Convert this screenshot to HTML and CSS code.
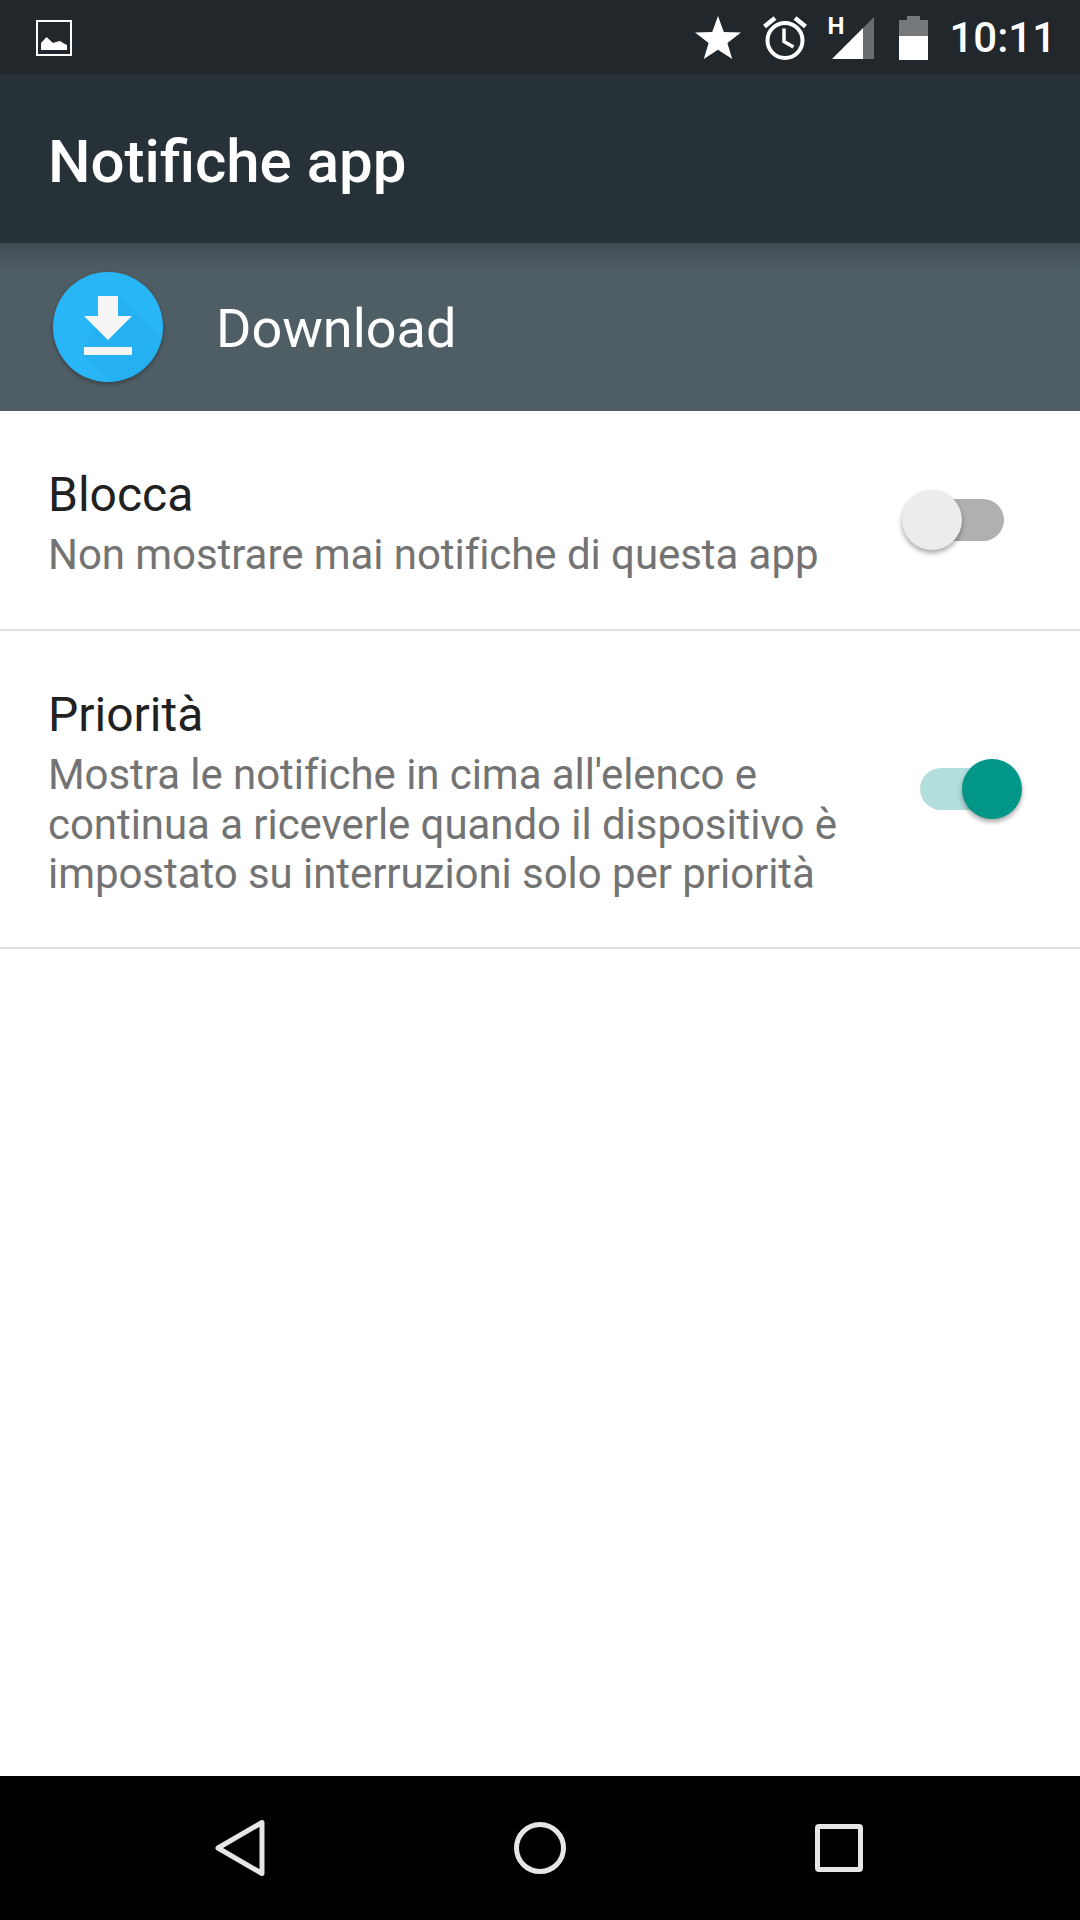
FILE: index.html
```html
<!DOCTYPE html>
<html lang="it">
<head>
  <meta charset="UTF-8">
  <title>Notifiche app</title>
  <link rel="stylesheet" href="styles.css">
</head>
<body>
  <div class="screen">

    <!-- Barra di stato -->
    <div class="status-bar">
      <svg class="ico-picture" width="36" height="36" viewBox="0 0 36 36">
        <path fill="#fff" fill-rule="evenodd" d="M0 0h36v36H0z M2 2v32h32V2z"/>
        <path fill="#fff" d="M5 30v-7l5.500-6 6.500 6 3-1 4-1 3 2 4 2v5z"/>
      </svg>
      <div class="status-right">
        <svg class="ico-star" width="46" height="43" viewBox="0 0 46 43">
          <path fill="#fff" d="M23 0l5.800 15.900 17.200.6-13.600 10.500 4.800 16L23 33.700 8.800 43l4.800-16L0 16.500l17.200-.6z"/>
        </svg>
        <svg class="ico-alarm" width="44" height="44" viewBox="0 0 44 44">
          <circle cx="22" cy="24.500" r="17.500" fill="none" stroke="#fff" stroke-width="4"/>
          <path fill="none" stroke="#fff" stroke-width="3.500" d="M21 12.500v13l9.500 5.500"/>
          <path fill="none" stroke="#fff" stroke-width="4.500" d="M1.500 10.500L12 2 M42.500 10.500L32 2"/>
        </svg>
        <div class="signal">
          <span class="signal-h">H</span>
          <svg width="42" height="42" viewBox="0 0 42 42">
            <path fill="#fff" fill-opacity=".32" d="M42 0v42H31V11z"/>
            <path fill="#fff" d="M31 11v31H0z"/>
          </svg>
        </div>
        <svg class="ico-battery" width="29" height="44" viewBox="0 0 29 44">
          <path fill="#fff" fill-opacity=".38" d="M8 0h13v4h8v16H0V4h8z"/>
          <path fill="#fff" d="M0 20h29v24H0z"/>
        </svg>
        <span class="clock">10:11</span>
      </div>
    </div>

    <!-- Action bar -->
    <div class="app-bar">Notifiche app</div>

    <!-- App selezionata -->
    <div class="app-header">
      <svg class="app-icon" width="112" height="112" viewBox="0 0 112 112">
        <defs>
          <clipPath id="disc"><circle cx="56" cy="55" r="55"/></clipPath>
        </defs>
        <circle cx="56" cy="55" r="55" fill="#29b6f6"/>
        <path clip-path="url(#disc)" fill="#0288d1" fill-opacity=".12" d="M66 24l46 46v42H60L32 83V75z"/>
        <path fill="#f5f5f5" d="M46 24h20v20h14L56 68 32 44h14z"/>
        <path fill="#f5f5f5" d="M32 75h48v8H32z"/>
      </svg>
      <span class="app-name">Download</span>
    </div>

    <!-- Impostazioni -->
    <div class="settings">
      <div class="row row-block">
        <div class="row-text">
          <div class="row-title">Blocca</div>
          <div class="row-summary">Non mostrare mai notifiche di questa app</div>
        </div>
        <div class="switch">
          <div class="track track-off"></div>
          <div class="thumb thumb-off"></div>
        </div>
      </div>
      <div class="row row-priority">
        <div class="row-text">
          <div class="row-title">Priorità</div>
          <div class="row-summary">Mostra le notifiche in cima all'elenco e<br>continua a riceverle quando il dispositivo è<br>impostato su interruzioni solo per priorità</div>
        </div>
        <div class="switch">
          <div class="track track-on"></div>
          <div class="thumb thumb-on"></div>
        </div>
      </div>
    </div>

    <!-- Barra di navigazione -->
    <div class="nav-bar">
      <svg width="50" height="58" viewBox="0 0 50 58">
        <path fill="none" stroke="#e6e6e6" stroke-width="5" stroke-linejoin="round" d="M47 3.500v51L3 29z"/>
      </svg>
      <svg width="52" height="52" viewBox="0 0 52 52">
        <circle cx="26" cy="26" r="23.500" fill="none" stroke="#e6e6e6" stroke-width="5"/>
      </svg>
      <svg width="48" height="48" viewBox="0 0 48 48">
        <rect x="2.500" y="2.500" width="43" height="43" rx="1.500" fill="none" stroke="#e6e6e6" stroke-width="5"/>
      </svg>
    </div>

  </div>
</body>
</html>
```

FILE: styles.css
```css
* { box-sizing: border-box; margin: 0; padding: 0; }
body { background: #fff; font-family: Roboto, sans-serif; }
svg { display: block; flex: none; }

.screen {
  display: flex;
  flex-direction: column;
  width: 1080px;
  height: 1920px;
  overflow: hidden;
}

.status-bar {
  display: flex;
  align-items: center;
  justify-content: space-between;
  flex: none;
  height: 75px;
  padding: 0 24px 0 36px;
  background: #21272b;
}
.status-right {
  display: flex;
  align-items: center;
}
.ico-star { margin-right: 22px; }
.ico-alarm { margin-right: 25px; }
.signal {
  position: relative;
  margin-right: 25px;
}
.signal-h {
  position: absolute;
  left: -5px;
  top: -2px;
  color: #fff;
  font-family: "Liberation Sans Narrow", Roboto, sans-serif;
  font-size: 24px;
  font-weight: 700;
  line-height: 22px;
}
.clock {
  color: #fff;
  font-size: 42px;
  font-weight: 500;
  margin-left: 21px;
}

.app-bar {
  flex: none;
  height: 168px;
  padding-left: 48px;
  background: #263238;
  color: #fff;
  font-size: 60px;
  font-weight: 500;
  line-height: 173px;
}

.app-header {
  display: flex;
  align-items: center;
  flex: none;
  height: 168px;
  padding-left: 52px;
  background: linear-gradient(#414d54, #4f5d65 30px, #4f5d65);
}
.app-icon {
  margin-right: 52px;
  margin-top: 2px;
  filter: drop-shadow(0 2px 2px rgba(0, 0, 0, 0.3));
}
.app-name {
  padding-top: 3px;
  color: #fff;
  font-size: 54px;
}

.settings { flex: 1; }
.row {
  display: flex;
  align-items: center;
  justify-content: space-between;
  padding-left: 48px;
  border-bottom: 2px solid #e0e0e0;
}
.row-block { height: 220px; padding-bottom: 2px; }
.row-block .switch { margin-top: 2px; }
.row-priority { height: 318px; }
.row-title {
  color: #212121;
  font-size: 48px;
  line-height: 71px;
}
.row-summary {
  color: #737373;
  font-size: 42px;
  letter-spacing: -0.06px;
  line-height: 49.4px;
}

.switch {
  position: relative;
  width: 120px;
  height: 62px;
  margin-right: 58px;
}
.track {
  position: absolute;
  left: 18px;
  top: 10px;
  width: 84px;
  height: 42px;
  border-radius: 21px;
}
.track-off { background: #b0b0b0; }
.track-on { background: #b2dfdb; }
.thumb {
  position: absolute;
  top: 1px;
  width: 60px;
  height: 60px;
  border-radius: 50%;
  box-shadow: 0 3px 5px rgba(0, 0, 0, 0.35);
}
.thumb-off { left: 0; background: #ececec; }
.thumb-on { right: 0; background: #009688; }

.nav-bar {
  display: flex;
  align-items: center;
  justify-content: center;
  gap: 249px;
  flex: none;
  height: 144px;
  padding-right: 2px;
  background: #000;
}
```
